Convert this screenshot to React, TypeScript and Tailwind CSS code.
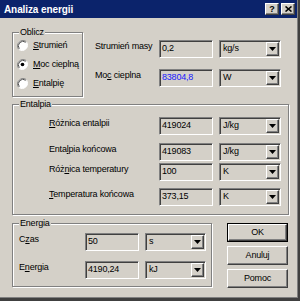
import React from 'react';

const FACE = 'bg-[#d4d0c8]';
const SUNKEN =
  'border border-t-[#808080] border-l-[#808080] border-b-white border-r-white shadow-[inset_1px_1px_0_#404040,inset_-1px_-1px_0_#d4d0c8]';
const RAISED =
  'border border-t-white border-l-white border-b-[#404040] border-r-[#404040] shadow-[inset_-1px_-1px_0_#808080,inset_1px_1px_0_#d4d0c8]';

function GroupBox({
  label,
  className,
  children,
}: {
  label: string;
  className: string;
  children?: React.ReactNode;
}) {
  return (
    <div
      className={`relative border border-[#808080] shadow-[inset_1px_1px_0_#fff,1px_1px_0_#fff] ${className}`}
    >
      <span className={`absolute -top-[6px] left-[6px] px-[1px] leading-[11px] ${FACE}`}>
        {label}
      </span>
      {children}
    </div>
  );
}

function Field({ value, blue, w = 'w-[54px]' }: { value: string; blue?: boolean; w?: string }) {
  return (
    <div
      className={`${w} h-[18px] ${SUNKEN} pl-[2px] pt-[2px] leading-[11px] ${
        blue ? 'text-[#1818ff]' : 'text-black'
      }`}
    >
      {value}
    </div>
  );
}

function Combo({ value, w = 'w-[62px]' }: { value: string; w?: string }) {
  return (
    <div className={`${w} h-[18px] ${SUNKEN} flex p-[1px]`}>
      <div className="flex-1 pl-[2px] pt-[1px] leading-[11px]">{value}</div>
      <div className={`w-[13px] h-full ${RAISED} flex items-center justify-center`}>
        <svg width="7" height="4" viewBox="0 0 7 4">
          <path d="M0 0h7L3.5 4z" fill="#000" />
        </svg>
      </div>
    </div>
  );
}

function Radio({ checked, children }: { checked?: boolean; children: React.ReactNode }) {
  return (
    <div className="flex h-[11px] items-center">
      <svg width="11" height="11" viewBox="0 0 12 12" className="ml-[4px] shrink-0">
        <circle cx="6" cy="6" r="5.5" fill="#fff" />
        <path d="M10.2 1.8A6 6 0 0 0 1.8 10.2" stroke="#808080" strokeWidth="1" fill="none" />
        <path d="M9.5 2.5A5 5 0 0 0 2.5 9.5" stroke="#404040" strokeWidth="1" fill="none" />
        <path d="M1.8 10.2A6 6 0 0 0 10.2 1.8" stroke="#fff" strokeWidth="1" fill="none" />
        {checked && <circle cx="6" cy="6" r="2" fill="#000" />}
      </svg>
      <span className="ml-[5px] leading-[11px]">{children}</span>
    </div>
  );
}

function Btn({ children, def }: { children: React.ReactNode; def?: boolean }) {
  const inner = (
    <div className={`h-full w-full ${RAISED} flex items-center justify-center leading-[11px]`}>
      {children}
    </div>
  );
  return def ? (
    <div className="h-[19px] w-[61px] border border-black">{inner}</div>
  ) : (
    <div className="h-[19px] w-[61px]">{inner}</div>
  );
}

function Row({
  label,
  labelW,
  children,
  className = '',
}: {
  label: React.ReactNode;
  labelW: string;
  children: React.ReactNode;
  className?: string;
}) {
  return (
    <div className={`flex items-start ${className}`}>
      <div className={`${labelW} pt-[1px] leading-[11px]`}>{label}</div>
      {children}
    </div>
  );
}

export default function App() {
  return (
    <div
      className={`relative h-[301px] w-[300px] overflow-hidden ${FACE} border-r-2 border-b-[3px] border-r-[#404040] border-b-[#404040] text-[9px] tracking-[-0.2px] text-black`}
      style={{ fontFamily: '"Liberation Sans", Arial, sans-serif' }}
    >
      <div className="h-full border-r border-b border-r-[#808080] border-b-[#808080]">
        {/* title bar */}
        <div className="flex h-[18px] w-[297px] items-center bg-[#0b236b] pl-[4px] pr-[2px]">
          <span className="text-[10px] font-bold tracking-[-0.1px] text-white">Analiza energii</span>
          <div className="ml-auto flex gap-[2px]">
            <div className={`h-[12px] w-[14px] ${FACE} ${RAISED} flex items-center justify-center text-[9px] font-bold leading-none`}>
              ?
            </div>
            <div className={`h-[12px] w-[14px] ${FACE} ${RAISED} flex items-center justify-center`}>
              <svg width="7" height="6" viewBox="0 0 7 6">
                <path d="M0.5 0.5L6.5 5.5M6.5 0.5L0.5 5.5" stroke="#000" strokeWidth="1.6" />
              </svg>
            </div>
          </div>
        </div>

        <div className="pl-[12px] pt-[14px]">
          {/* top row */}
          <div className="flex">
            <GroupBox label="Oblicz" className="h-[65px] w-[71px]">
              <div className="flex flex-col gap-[8px] pt-[7px]">
                <Radio>
                  <u>S</u>trumień
                </Radio>
                <Radio checked>
                  <u>M</u>oc cieplną
                </Radio>
                <Radio>
                  <u>E</u>ntalpię
                </Radio>
              </div>
            </GroupBox>
            <div className="ml-[12px] flex flex-col gap-[11px] pt-[8px]">
              <Row label="Strumień masy" labelW="w-[64px]">
                <Field value="0,2" />
                <div className="ml-[6px]">
                  <Combo value="kg/s" />
                </div>
              </Row>
              <Row
                label={
                  <>
                    Mo<u>c</u> cieplna
                  </>
                }
                labelW="w-[64px]"
              >
                <Field value="83804,8" blue />
                <div className="ml-[6px]">
                  <Combo value="W" />
                </div>
              </Row>
            </div>
          </div>

          {/* Entalpia */}
          <GroupBox label="Entalpia" className="mt-[7px] h-[111px] w-[277px]">
            <div className="flex flex-col pl-[36px] pt-[12px]">
              <Row
                label={
                  <>
                    <u>R</u>óżnica entalpii
                  </>
                }
                labelW="w-[110px]"
              >
                <Field value="419024" />
                <div className="ml-[6px]">
                  <Combo value="J/kg" />
                </div>
              </Row>
              <Row
                className="mt-[8px]"
                label={
                  <>
                    Enta<u>l</u>pia końcowa
                  </>
                }
                labelW="w-[110px]"
              >
                <Field value="419083" />
                <div className="ml-[6px]">
                  <Combo value="J/kg" />
                </div>
              </Row>
              <Row
                className="mt-[2px]"
                label={
                  <>
                    Róż<u>n</u>ica temperatury
                  </>
                }
                labelW="w-[110px]"
              >
                <Field value="100" />
                <div className="ml-[6px]">
                  <Combo value="K" />
                </div>
              </Row>
              <Row
                className="mt-[7px]"
                label={
                  <>
                    <u>T</u>emperatura końcowa
                  </>
                }
                labelW="w-[110px]"
              >
                <Field value="373,15" />
                <div className="ml-[6px]">
                  <Combo value="K" />
                </div>
              </Row>
            </div>
          </GroupBox>

          {/* bottom row */}
          <div className="mt-[8px] flex items-start">
            <GroupBox label="Energia" className="h-[64px] w-[200px]">
              <div className="flex flex-col gap-[10px] pl-[6px] pt-[9px]">
                <Row
                  label={
                    <>
                      C<u>z</u>as
                    </>
                  }
                  labelW="w-[66px]"
                >
                  <Field value="50" />
                  <div className="ml-[6px]">
                    <Combo value="s" w="w-[61px]" />
                  </div>
                </Row>
                <Row
                  label={
                    <>
                      E<u>n</u>ergia
                    </>
                  }
                  labelW="w-[66px]"
                >
                  <Field value="4190,24" />
                  <div className="ml-[6px]">
                    <Combo value="kJ" w="w-[61px]" />
                  </div>
                </Row>
              </div>
            </GroupBox>
            <div className="ml-[15px] flex flex-col gap-[4px]">
              <Btn def>OK</Btn>
              <Btn>Anuluj</Btn>
              <Btn>Pomoc</Btn>
            </div>
          </div>
        </div>
      </div>
    </div>
  );
}
